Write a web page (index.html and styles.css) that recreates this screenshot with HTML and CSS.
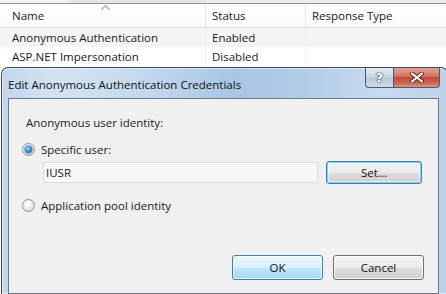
FILE: index.html
```html
<!DOCTYPE html>
<html>
<head>
<meta charset="utf-8">
<link rel="stylesheet" href="styles.css">
</head>
<body>
<div class="list">
  <div class="list-top"></div>
  <div class="list-head">
    <div class="col c1">Name<svg class="sort" width="9" height="5" viewBox="0 0 9 5"><path d="M0.5 4.5 L4.5 0.8 L8.5 4.5" fill="none" stroke="#9aa4b0" stroke-width="1.2"/></svg></div>
    <div class="col c2">Status</div>
    <div class="col c3">Response Type</div>
  </div>
  <div class="row alt">
    <div class="col c1">Anonymous Authentication</div>
    <div class="col c2">Enabled</div>
    <div class="col c3"></div>
  </div>
  <div class="row">
    <div class="col c1">ASP.NET Impersonation</div>
    <div class="col c2">Disabled</div>
    <div class="col c3"></div>
  </div>
</div>
<div class="dialog">
  <div class="titlebar">
    <div class="title">Edit Anonymous Authentication Credentials</div>
    <div class="caption-btns">
      <div class="cbtn help">?</div>
      <div class="cbtn close">
        <svg width="14" height="11" viewBox="0 0 14 11"><path d="M2 1.5 L12 9.5 M12 1.5 L2 9.5" stroke="#5a2a2a" stroke-width="4" stroke-linecap="round"/><path d="M2 1.5 L12 9.5 M12 1.5 L2 9.5" stroke="#ffffff" stroke-width="2.2" stroke-linecap="round"/></svg>
      </div>
    </div>
  </div>
  <div class="client">
    <div class="group-label">Anonymous user identity:</div>
    <div class="radio-row first">
      <span class="radio checked"></span>
      <span>Specific user:</span>
    </div>
    <div class="user-row">
      <div class="textbox">IUSR</div>
      <div class="btn focus">Set...</div>
    </div>
    <div class="radio-row second">
      <span class="radio"></span>
      <span>Application pool identity</span>
    </div>
    <div class="actions">
      <div class="btn hot">OK</div>
      <div class="btn">Cancel</div>
    </div>
  </div>
</div>
</body>
</html>
```
FILE: styles.css
```css
html, body {
  margin: 0;
  padding: 0;
}
body {
  width: 446px;
  height: 294px;
  overflow: hidden;
  background: #ffffff;
  font-family: "Open Sans", "Noto Sans", sans-serif;
  font-size: 11.5px;
  color: #1a1a1a;
}
.list {
  height: 67px;
  overflow: hidden;
}
.list-top {
  height: 3px;
  background: linear-gradient(to right, #f2f2f2 0, #f2f2f2 68px, #e6e6e6 68px, #e6e6e6 206px, #ececec 206px);
}
.list-head {
  display: flex;
  height: 24px;
  border-top: 1px solid #8f9499;
  border-bottom: 1px solid #d6e1ec;
  background: linear-gradient(#ffffff, #f7f9fb);
  box-sizing: border-box;
  height: 25px;
}
.col {
  box-sizing: border-box;
  padding-left: 6px;
  display: flex;
  align-items: center;
  white-space: nowrap;
  position: relative;
}
.c1 {
  width: 206px;
  padding-left: 12px;
  border-right: 1px solid #e3e8ee;
}
.c2 {
  width: 100px;
  border-right: 1px solid #e3e8ee;
}
.c3 {
  flex: 1;
}
.sort {
  position: absolute;
  left: 101px;
  top: 1px;
}
.row {
  display: flex;
  height: 19px;
}
.row .c1, .row .c2 {
  border-right-color: #eeeeee;
}
.row.alt {
  background: #f4f4f4;
}

.dialog {
  margin-left: 1px;
  width: 447px;
  height: 227px;
  box-sizing: border-box;
  border: 1px solid #3b4a5b;
  border-bottom: none;
  border-radius: 7px 7px 0 0;
  background: linear-gradient(to right, #c2d6ec 0, #d4e3f3 12%, #c6daee 30%, #a9c6e4 52%, #b2cce7 68%, #c8dbef 85%, #bcd2ea 100%);
  box-shadow: inset 0 0 0 1px rgba(255,255,255,0.55);
  display: flex;
  flex-direction: column;
}
.titlebar {
  height: 30px;
  display: flex;
  justify-content: space-between;
  align-items: flex-start;
  flex: none;
}
.title {
  padding: 9px 0 0 6px;
  font-size: 11.5px;
  color: #111;
  white-space: nowrap;
}
.caption-btns {
  display: flex;
  margin-right: 7px;
}
.cbtn {
  height: 20px;
  box-sizing: border-box;
  border: 1px solid #4a5a6c;
  border-top: none;
  display: flex;
  align-items: center;
  justify-content: center;
}
.help {
  width: 28px;
  border-right: none;
  border-radius: 0 0 0 4px;
  background: linear-gradient(#e4ecf4, #c9d5e2 50%, #b7c6d6 51%, #cfdbe7);
  color: #ffffff;
  font-family: "DejaVu Sans", sans-serif;
  font-weight: bold;
  font-size: 13px;
  text-shadow: 0 0 1px #3e4c5c, 0 0 1px #3e4c5c, 0 0 2px #3e4c5c;
}
.close {
  width: 47px;
  border-radius: 0 0 4px 0;
  background: linear-gradient(#e3a592, #d1705f 45%, #c24837 50%, #cc6652 80%, #dd9a7f);
}

.client {
  margin: 0 8px 0 6px;
  flex: 1;
  background: #f0f0f0;
  border: 1px solid #6c7b8c;
  display: flex;
  flex-direction: column;
  padding: 15px 13px 13px 13px;
}
.group-label {
  line-height: 18px;
  margin-left: 4px;
}
.radio-row {
  display: flex;
  align-items: center;
  gap: 6px;
  height: 18px;
}
.radio-row.first {
  margin-top: 8px;
}
.radio-row.second {
  margin-top: 12px;
}
.radio {
  width: 13px;
  height: 13px;
  box-sizing: border-box;
  border-radius: 50%;
  border: 1px solid #8e8f8f;
  background: radial-gradient(circle at 40% 35%, #ffffff 0, #e9e9e9 55%, #cfcfcf 100%);
  display: flex;
  align-items: center;
  justify-content: center;
}
.radio.checked::after {
  content: "";
  width: 7px;
  height: 7px;
  border-radius: 50%;
  background: radial-gradient(circle at 40% 35%, #a8e0fb 0, #3a8fd0 45%, #1c5b94 100%);
  box-shadow: 0 0 0 0.5px #20507e;
}
.user-row {
  display: flex;
  align-items: center;
  margin-top: 3px;
  margin-left: 21px;
  height: 23px;
}
.textbox {
  width: 275px;
  height: 21px;
  box-sizing: border-box;
  border: 1px solid #dcdcdc;
  background: #f7f7f7;
  padding-left: 2px;
  display: flex;
  align-items: center;
  margin-right: 8px;
}
.btn {
  width: 96px;
  height: 23px;
  box-sizing: border-box;
  border: 1px solid #707070;
  border-radius: 3px;
  background: linear-gradient(#f2f2f2 0, #ebebeb 50%, #dddddd 51%, #cfcfcf 100%);
  box-shadow: inset 0 0 0 1px rgba(255,255,255,0.75);
  display: flex;
  align-items: center;
  justify-content: center;
  color: #111;
}
.btn.focus {
  border-color: #3c7fb1;
  box-shadow: inset 0 0 0 1px #7fd1f2, inset 0 0 0 2px rgba(255,255,255,0.5);
}
.btn.hot {
  border-color: #3c7fb1;
  background: linear-gradient(#eaf6fd 0, #d9f0fc 50%, #bee6fd 51%, #a7d9f5 100%);
}
.actions {
  margin-top: auto;
  display: flex;
  justify-content: flex-end;
  gap: 10px;
  padding-right: 1px;
}
.actions .btn {
  width: 91px;
  height: 25px;
}
```
